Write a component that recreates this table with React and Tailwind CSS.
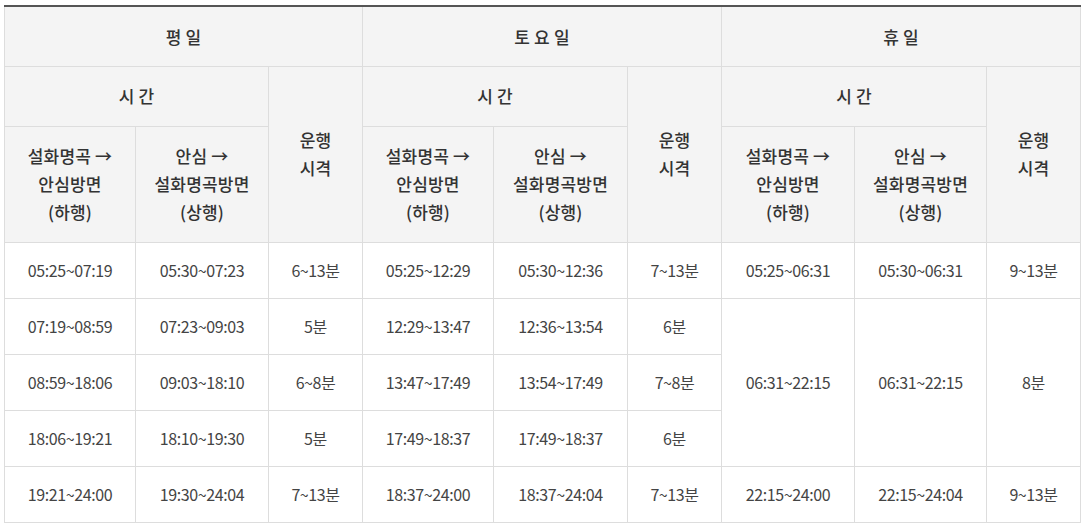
import React from "react";

const th = "border border-[#dddddd] bg-[#f4f4f4] text-[#333333] font-medium text-[17px] tracking-[0.2px] text-center align-middle";
const td = "border border-[#dddddd] bg-white text-[#444444] text-[16px] tracking-[-0.4px] text-center align-middle h-[56px]";

const Head = () => (
  <>
    <th className={`${th} h-[116px] leading-[28px]`}>설화명곡 →<br />안심방면<br />(하행)</th>
    <th className={`${th} h-[116px] leading-[28px]`}>안심 →<br />설화명곡방면<br />(상행)</th>
  </>
);

const App = () => {
  return (
    <div className="pl-[4px] pt-[5px] bg-white" style={{ fontFamily: '"Noto Sans CJK KR", "Noto Sans", sans-serif' }}>
      <table className="table-fixed border-collapse w-[1077px] border-t-2 border-t-[#555555]">
        <colgroup>
          <col className="w-[131px]" />
          <col className="w-[133px]" />
          <col className="w-[94px]" />
          <col className="w-[131px]" />
          <col className="w-[134px]" />
          <col className="w-[94px]" />
          <col className="w-[133px]" />
          <col className="w-[132px]" />
          <col className="w-[94px]" />
        </colgroup>
        <thead>
          <tr>
            <th colSpan={3} className={`${th} h-[60px] border-t-2 border-t-[#555555]`}>평 일</th>
            <th colSpan={3} className={`${th} h-[60px] border-t-2 border-t-[#555555]`}>토 요 일</th>
            <th colSpan={3} className={`${th} h-[60px] border-t-2 border-t-[#555555]`}>휴 일</th>
          </tr>
          <tr>
            <th colSpan={2} className={`${th} h-[60px]`}>시 간</th>
            <th rowSpan={2} className={`${th} leading-[28px]`}>운행<br />시격</th>
            <th colSpan={2} className={`${th} h-[60px]`}>시 간</th>
            <th rowSpan={2} className={`${th} leading-[28px]`}>운행<br />시격</th>
            <th colSpan={2} className={`${th} h-[60px]`}>시 간</th>
            <th rowSpan={2} className={`${th} leading-[28px]`}>운행<br />시격</th>
          </tr>
          <tr>
            <Head />
            <Head />
            <Head />
          </tr>
        </thead>
        <tbody>
          <tr>
            <td className={td}>05:25~07:19</td>
            <td className={td}>05:30~07:23</td>
            <td className={td}>6~13분</td>
            <td className={td}>05:25~12:29</td>
            <td className={td}>05:30~12:36</td>
            <td className={td}>7~13분</td>
            <td className={td}>05:25~06:31</td>
            <td className={td}>05:30~06:31</td>
            <td className={td}>9~13분</td>
          </tr>
          <tr>
            <td className={td}>07:19~08:59</td>
            <td className={td}>07:23~09:03</td>
            <td className={td}>5분</td>
            <td className={td}>12:29~13:47</td>
            <td className={td}>12:36~13:54</td>
            <td className={td}>6분</td>
            <td rowSpan={3} className={td}>06:31~22:15</td>
            <td rowSpan={3} className={td}>06:31~22:15</td>
            <td rowSpan={3} className={td}>8분</td>
          </tr>
          <tr>
            <td className={td}>08:59~18:06</td>
            <td className={td}>09:03~18:10</td>
            <td className={td}>6~8분</td>
            <td className={td}>13:47~17:49</td>
            <td className={td}>13:54~17:49</td>
            <td className={td}>7~8분</td>
          </tr>
          <tr>
            <td className={td}>18:06~19:21</td>
            <td className={td}>18:10~19:30</td>
            <td className={td}>5분</td>
            <td className={td}>17:49~18:37</td>
            <td className={td}>17:49~18:37</td>
            <td className={td}>6분</td>
          </tr>
          <tr>
            <td className={td}>19:21~24:00</td>
            <td className={td}>19:30~24:04</td>
            <td className={td}>7~13분</td>
            <td className={td}>18:37~24:00</td>
            <td className={td}>18:37~24:04</td>
            <td className={td}>7~13분</td>
            <td className={td}>22:15~24:00</td>
            <td className={td}>22:15~24:04</td>
            <td className={td}>9~13분</td>
          </tr>
        </tbody>
      </table>
    </div>
  );
};

export default App;
